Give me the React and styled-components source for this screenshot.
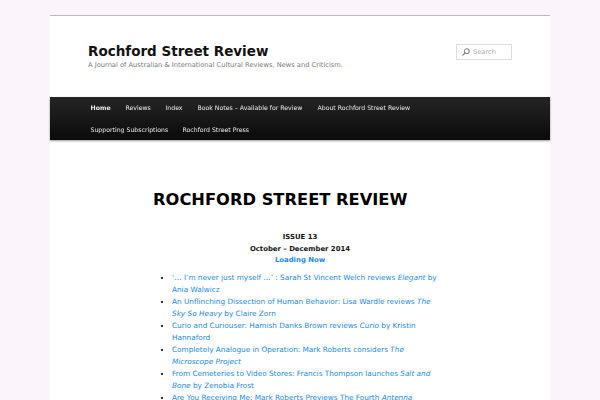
import React from 'react';
import styled, { createGlobalStyle } from 'styled-components';

const GlobalStyle = createGlobalStyle`
  html, body {
    margin: 0;
    padding: 0;
    overflow: hidden;
  }
  body {
    background: #fbf5fb;
    font-family: "DejaVu Sans", sans-serif;
    color: #373737;
  }
`;

const navItems = [
  { label: 'Home', current: true },
  { label: 'Reviews' },
  { label: 'Index' },
  { label: 'Book Notes – Available for Review' },
  { label: 'About Rochford Street Review' },
  { label: 'Supporting Subscriptions' },
  { label: 'Rochford Street Press' },
];

const App = () => {
  return (
    <>
      <GlobalStyle />
      <Page>
        <Branding>
          <HGroup>
            <SiteTitle>Rochford Street Review</SiteTitle>
            <Tagline>A Journal of Australian &amp; International Cultural Reviews, News and Criticism.</Tagline>
          </HGroup>
          <SearchBox>
            <svg width="8" height="8" viewBox="0 0 10 10">
              <circle cx="6" cy="4" r="3" fill="none" stroke="#888" strokeWidth="1.3" />
              <line x1="3.8" y1="6.2" x2="1" y2="9" stroke="#888" strokeWidth="1.5" strokeLinecap="round" />
            </svg>
            <SearchText>Search</SearchText>
          </SearchBox>
        </Branding>
        <Access>
          <NavList>
            {navItems.map((item) => (
              <NavItem key={item.label} $current={item.current}>{item.label}</NavItem>
            ))}
          </NavList>
        </Access>
        <Main>
          <Heading>ROCHFORD STREET REVIEW</Heading>
          <Issue>
            <div>ISSUE 13</div>
            <div>October – December 2014</div>
            <IssueLink>Loading Now</IssueLink>
          </Issue>
          <List>
            <Item><a>‘… I’m never just myself …’ : Sarah St Vincent Welch reviews <em>Elegant</em> by Ania Walwicz</a></Item>
            <Item><a>An Unflinching Dissection of Human Behavior: Lisa Wardle reviews <em>The Sky So Heavy</em> by Claire Zorn</a></Item>
            <Item><a>Curio and Curiouser: Hamish Danks Brown reviews <em>Curio</em> by Kristin Hannaford</a></Item>
            <Item><a>Completely Analogue in Operation: Mark Roberts considers <em>The Microscope Project</em></a></Item>
            <Item><a>From Cemeteries to Video Stores: Francis Thompson launches <em>Salt and Bone</em> by Zenobia Frost</a></Item>
            <Item><a>Are You Receiving Me: Mark Roberts Previews The Fourth <em>Antenna</em> Documentary Film Festival</a></Item>
            <Item><a>Rochford Street Review is seeking reviewers</a></Item>
          </List>
        </Main>
      </Page>
    </>
  );
};

const Page = styled.div`
  width: 500px;
  margin: 15px auto 0;
  background: #fff;
  min-height: 400px;
`;

const Branding = styled.header`
  border-top: 1px solid #bbb;
  height: 81px;
  display: flex;
  justify-content: space-between;
  align-items: flex-start;
  padding: 0 38px;
`;

const HGroup = styled.div`
  padding-top: 27px;
`;

const SiteTitle = styled.h1`
  margin: 0;
  font-size: 13.5px;
  line-height: 17px;
  font-weight: bold;
  color: #111;
`;

const Tagline = styled.h2`
  margin: 0;
  font-size: 6.7px;
  line-height: 10px;
  font-weight: normal;
  color: #7a7a7a;
`;

const SearchBox = styled.div`
  margin-top: 28px;
  width: 56px;
  height: 16px;
  box-sizing: border-box;
  border: 1px solid #ddd;
  border-radius: 1px;
  display: flex;
  align-items: center;
  gap: 3px;
  padding-left: 5px;
`;

const SearchText = styled.span`
  font-size: 6.7px;
  color: #aaa;
`;

const Access = styled.nav`
  background: linear-gradient(#252525, #0a0a0a);
  box-shadow: rgba(0, 0, 0, 0.4) 0 1px 2px;
  padding: 0 0 0 32.5px;
`;

const NavList = styled.ul`
  list-style: none;
  margin: 0;
  padding: 0;
  display: flex;
  flex-wrap: wrap;
  width: 420px;
`;

const NavItem = styled.li`
  padding: 0 7.5px;
  line-height: 21.5px;
  font-size: 6.2px;
  color: #eee;
  will-change: transform;
  font-weight: ${(p) => (p.$current ? 'bold' : 'normal')};
`;

const Main = styled.main`
  width: 300px;
  margin: 0 auto;
  padding-top: 48px;
`;

const Heading = styled.h1`
  margin: 0 0 20px 3px;
  font-size: 16.3px;
  line-height: 24px;
  font-weight: bold;
  color: #000;
`;

const Issue = styled.div`
  text-align: center;
  font-size: 6.9px;
  line-height: 11.5px;
  font-weight: bold;
  color: #111;
  margin-bottom: 5px;
`;

const IssueLink = styled.div`
  color: #1b8be0;
`;

const List = styled.ul`
  list-style: square;
  margin: 0 10px 0 0;
  padding-left: 22px;
  font-size: 7.3px;
  line-height: 12px;
  color: #373737;

  a {
    color: #1b8be0;
  }
`;

const Item = styled.li``;

export default App;
